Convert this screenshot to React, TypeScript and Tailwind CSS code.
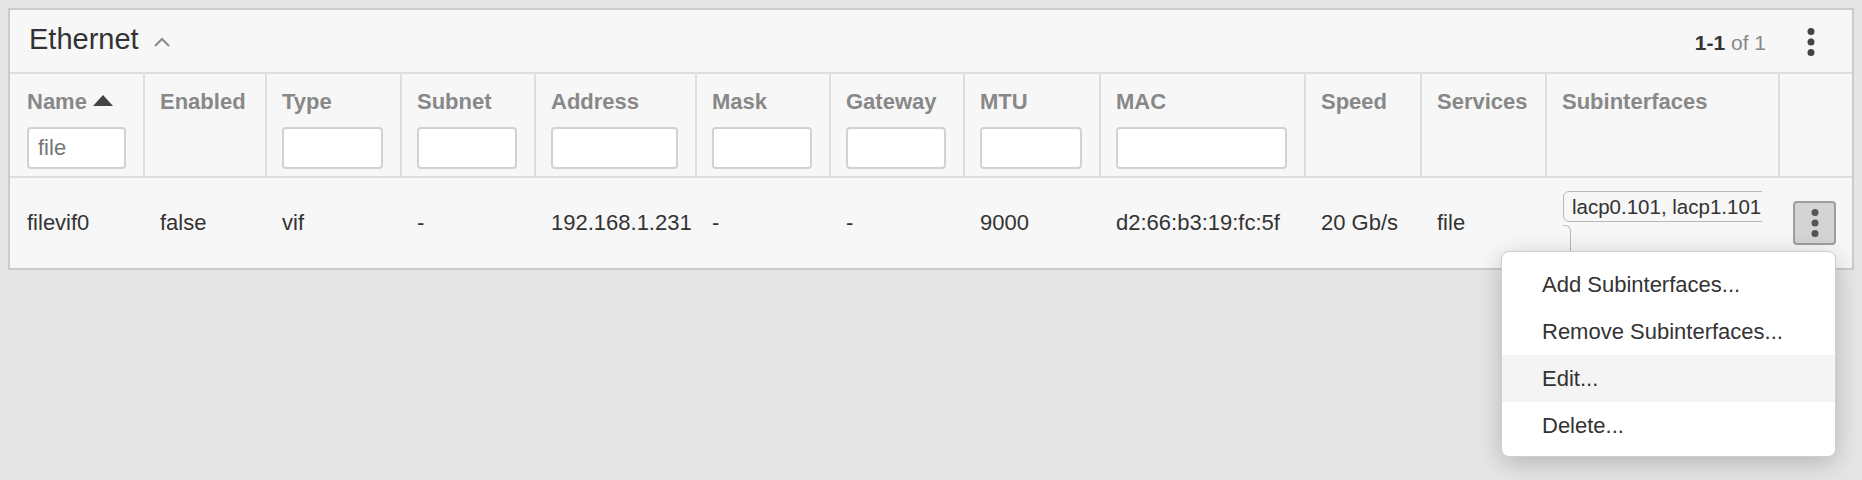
import React from 'react'

// ─────────────────────────────────────────────────────────────
// Data
// ─────────────────────────────────────────────────────────────

interface Column {
  label: string
  value: string
  filter?: boolean
  sorted?: boolean
}

const COLUMNS: Column[] = [
  { label: 'Name', value: 'filevif0', filter: true, sorted: true },
  { label: 'Enabled', value: 'false' },
  { label: 'Type', value: 'vif', filter: true },
  { label: 'Subnet', value: '-', filter: true },
  { label: 'Address', value: '192.168.1.231', filter: true },
  { label: 'Mask', value: '-', filter: true },
  { label: 'Gateway', value: '-', filter: true },
  { label: 'MTU', value: '9000', filter: true },
  { label: 'MAC', value: 'd2:66:b3:19:fc:5f', filter: true },
  { label: 'Speed', value: '20 Gb/s' },
  { label: 'Services', value: 'file' },
]

const MENU_ITEMS = ['Add Subinterfaces...', 'Remove Subinterfaces...', 'Edit...', 'Delete...']

const GRID =
  'grid grid-cols-[133px_122px_135px_134px_161px_134px_134px_136px_205px_116px_125px_233px_1fr]'

// ─────────────────────────────────────────────────────────────
// Icons
// ─────────────────────────────────────────────────────────────

function Kebab({ className }: { className?: string }) {
  return (
    <svg width="8" height="29" viewBox="0 0 8 29" className={className} fill="currentColor">
      <circle cx="4" cy="3.5" r="3.5" />
      <circle cx="4" cy="14" r="3.5" />
      <circle cx="4" cy="24.5" r="3.5" />
    </svg>
  )
}

function ChevronUp() {
  return (
    <svg width="16" height="10" viewBox="0 0 16 10" className="ml-[15px] mt-[5px] text-[#8a8a8a]">
      <polyline points="1,9 8,2 15,9" fill="none" stroke="currentColor" strokeWidth="2" />
    </svg>
  )
}

function SortUp() {
  return (
    <svg width="20" height="11" viewBox="0 0 20 11" className="ml-[6px] mt-[-3px] text-[#444]">
      <polygon points="10,0 20,11 0,11" fill="currentColor" />
    </svg>
  )
}

// ─────────────────────────────────────────────────────────────
// Row actions menu
// ─────────────────────────────────────────────────────────────

function RowMenu() {
  return (
    <div className="absolute right-[16px] top-[73px] z-10 w-[335px] rounded-[8px] border border-[#cfcfcf] bg-white pt-[9px] pb-[7px] shadow-[0_6px_26px_rgba(0,0,0,0.22)]">
      {MENU_ITEMS.map((item) => (
        <div
          key={item}
          className={`h-[47px] pl-[40px] text-[22px] leading-[47px] text-[#333] ${
            item === 'Edit...' ? 'bg-[#f4f4f4]' : ''
          }`}
        >
          {item}
        </div>
      ))}
    </div>
  )
}

// ─────────────────────────────────────────────────────────────
// Page
// ─────────────────────────────────────────────────────────────

export default function App() {
  return (
    <div className="min-h-[480px] bg-[#e6e6e6] p-2 font-['Liberation_Sans',Arial,sans-serif]">
      <section className="border-2 border-[#cbcbcb] bg-[#f7f7f7]">
        {/* Title bar */}
        <div className="flex h-[64px] items-center justify-between border-b-2 border-[#dedede] pl-[19px] pr-[37px]">
          <div className="mb-[4px] flex items-center">
            <h2 className="text-[29px] leading-[34px] text-[#333]">Ethernet</h2>
            <ChevronUp />
          </div>
          <div className="mt-[3px] flex items-center">
            <span className="text-[21px] leading-[26px] text-[#888]">
              <span className="font-bold text-[#333]">1-1</span> of 1
            </span>
            <Kebab className="ml-[41px] text-[#444]" />
          </div>
        </div>

        {/* Column headers */}
        <div className={`${GRID} border-b-2 border-[#dedede]`}>
          {COLUMNS.map((col, i) => (
            <div
              key={col.label}
              className={`h-[102px] pt-[15px] pr-[17px] ${
                i > 0 ? 'border-l-2 border-[#dedede] pl-[15px]' : 'pl-[17px]'
              }`}
            >
              <div className="flex items-center text-[22px] font-bold leading-[26px] text-[#888]">
                {col.label}
                {col.sorted && <SortUp />}
              </div>
              {col.filter && (
                <input
                  readOnly
                  defaultValue={col.sorted ? 'file' : ''}
                  className="mt-[12px] block h-[42px] w-full rounded-[4px] border-2 border-[#d2d2d2] bg-white px-[9px] text-[22px] text-[#777] outline-none"
                />
              )}
            </div>
          ))}
          <div className="h-[102px] border-l-2 border-[#dedede] pl-[15px] pt-[15px] text-[22px] font-bold leading-[26px] text-[#888]">
            Subinterfaces
          </div>
          <div className="h-[102px] border-l-2 border-[#dedede]" />
        </div>

        {/* Data row */}
        <div className={`${GRID} h-[90px] items-center text-[22px] leading-[26px] text-[#333]`}>
          {COLUMNS.map((col) => (
            <div key={col.label} className="whitespace-nowrap pl-[17px] pr-[15px]">
              {col.value}
            </div>
          ))}
          <div className="self-start pt-[13px] pl-[18px] pr-[16px]">
            <div className="overflow-hidden">
              <div className="inline-block h-[31px] whitespace-nowrap rounded-[6px] border border-[#b9b9b9] pl-[8px] pr-[10px] text-[20.5px] leading-[29px]">
                lacp0.101, lacp1.101
              </div>
              <div className="mt-[3px] h-[32px] w-[8px] rounded-tr-[6px] border-t border-r border-[#b9b9b9]" />
            </div>
          </div>
          <div className="relative flex h-full items-center justify-end pr-[16px]">
            <button className="flex h-[44px] w-[43px] items-center justify-center rounded-[4px] border-2 border-[#9e9e9e] bg-[#d4d4d4] text-[#555]">
              <Kebab />
            </button>
            <RowMenu />
          </div>
        </div>
      </section>
    </div>
  )
}
